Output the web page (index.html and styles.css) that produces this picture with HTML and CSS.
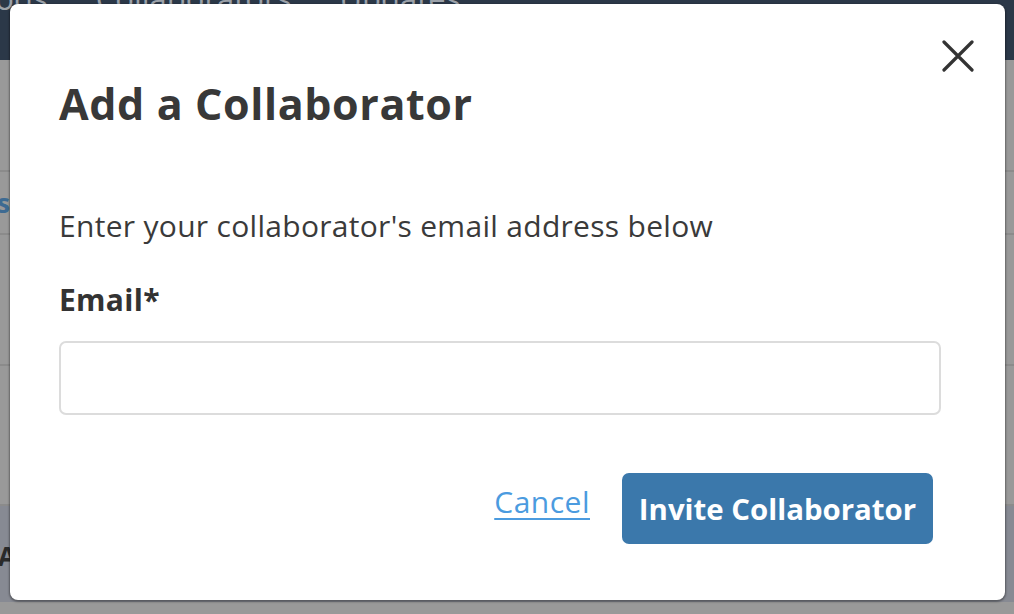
FILE: index.html
```html
<!DOCTYPE html>
<html lang="en">
<head>
<meta charset="utf-8">
<title>Add a Collaborator</title>
<link rel="stylesheet" href="styles.css">
</head>
<body>
<div class="page">
  <nav class="topnav">
    <span class="nav-item">Methods</span>
    <span class="nav-item">Collaborators</span>
    <span class="nav-item">Updates</span>
  </nav>
  <div class="rows">
    <div class="row r1"></div>
    <div class="row r2"><div class="edge"><span class="link-frag">Projects</span></div></div>
    <div class="row r3"></div>
    <div class="row r4"></div>
    <div class="row r5"><span class="bold-frag">About</span></div>
  </div>
</div>

<div class="modal" role="dialog" aria-labelledby="modal-title">
  <button class="close" aria-label="Close">
    <svg width="32" height="32" viewBox="0 0 32 32"><path d="M2 2 L30 30 M30 2 L2 30" stroke="#333" stroke-width="3.2" stroke-linecap="round" fill="none"/></svg>
  </button>
  <h2 class="title" id="modal-title">Add a Collaborator</h2>
  <p class="intro">Enter your collaborator's email address below</p>
  <label class="label" for="email">Email*</label>
  <input class="input" id="email" type="email">
  <div class="actions">
    <a class="cancel" href="#">Cancel</a>
    <button class="primary">Invite Collaborator</button>
  </div>
</div>
</body>
</html>
```
FILE: styles.css
```css
* { box-sizing: border-box; }
html, body { margin: 0; padding: 0; }
body {
  width: 1014px;
  height: 614px;
  overflow: hidden;
  background: #999999;
  font-family: "Open Sans", "Liberation Sans", sans-serif;
  position: relative;
}
.page { display: flex; flex-direction: column; }
.topnav {
  height: 60px;
  background: #2b3848;
  display: flex;
  gap: 48px;
  margin-left: -80px;
  align-items: flex-start;
  overflow: hidden;
}
.nav-item {
  color: #9ca2aa;
  font-size: 31px;
  line-height: 31px;
  margin-top: -17px;
}
.rows { display: flex; flex-direction: column; }
.row { border-bottom: 2px solid #8b8b8b; }
.r1 { height: 112px; }
.r2 { height: 63px; display: flex; align-items: center; }
.r3 { height: 131px; }
.r4 { height: 140px; }
.r5 { height: 96px; background: #878a93; display: flex; align-items: center; border-bottom: none; }
.edge {
  width: 10px;
  display: flex;
  justify-content: flex-end;
}
.link-frag {
  color: #3d6a92;
  font-weight: 700;
  font-size: 26px;
  white-space: nowrap;
  flex-shrink: 0;
}
.bold-frag { color: #2a2a2a; font-weight: 700; font-size: 26px; margin-left: -2px; padding-top: 4px; }

.modal {
  position: absolute;
  left: 10px;
  top: 4px;
  width: 995px;
  height: 596px;
  background: #ffffff;
  border-radius: 8px;
  box-shadow: 0 1px 2px 1px rgba(0,0,0,0.35);
  padding: 68px 64px 0 49px;
  display: flex;
  flex-direction: column;
  color: #333333;
}
.close {
  position: absolute;
  top: 36px;
  right: 31px;
  width: 32px;
  height: 32px;
  padding: 0;
  border: 0;
  background: none;
  display: flex;
}
.title {
  margin: 0;
  font-size: 43px;
  letter-spacing: 0.6px;
  line-height: 64px;
  font-weight: 700;
  color: #383838;
}
.intro {
  margin: 70px 0 0;
  font-size: 30px;
  letter-spacing: 0.3px;
  line-height: 40px;
  font-weight: 400;
  color: #3a3a3a;
}
.label {
  margin-top: 34px;
  font-size: 30px;
  letter-spacing: 0.3px;
  line-height: 40px;
  font-weight: 700;
  color: #333;
}
.input {
  margin-top: 21px;
  width: 882px;
  height: 74px;
  border: 2px solid #dcdcdc;
  border-radius: 7px;
  background: #fff;
}
.actions {
  margin-top: 58px;
  display: flex;
  justify-content: flex-end;
  align-items: center;
  gap: 32px;
  padding-right: 8px;
}
.cancel {
  color: #4b9bdf;
  font-size: 30px;
  letter-spacing: 0.5px;
  text-decoration: underline;
  text-underline-offset: 5px;
  text-decoration-thickness: 2px;
  margin-top: -14px;
}
.primary {
  width: 311px;
  height: 71px;
  background: #3b78ab;
  color: #ffffff;
  border: 0;
  border-radius: 7px;
  font-family: inherit;
  font-size: 29.4px;
  font-weight: 700;
  padding: 0;
}
```
